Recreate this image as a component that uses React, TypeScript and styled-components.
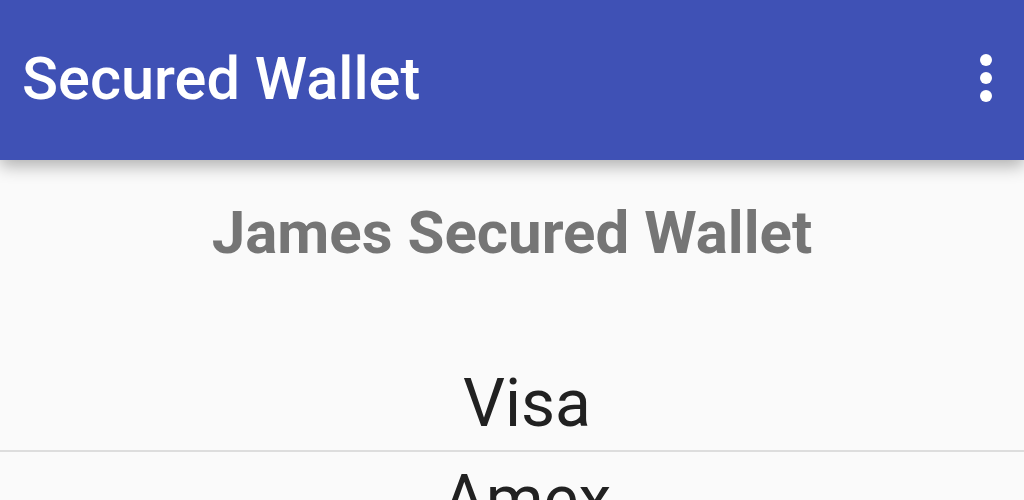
import React from 'react';
import styled, { createGlobalStyle } from 'styled-components';

const cards = ['Visa', 'Amex', 'MasterCard'];

const App: React.FC = () => {
  return (
    <>
      <GlobalStyle />
      <Screen>
        <AppBar>
          <Title>Secured Wallet</Title>
          <MenuButton aria-label="More options">
            <Dot />
            <Dot />
            <Dot />
          </MenuButton>
        </AppBar>

        <Content>
          <Heading>James Secured Wallet</Heading>
          <CardList>
            {cards.map((card) => (
              <CardRow key={card}>{card}</CardRow>
            ))}
          </CardList>
        </Content>
      </Screen>
    </>
  );
};

export default App;

// Styles
const GlobalStyle = createGlobalStyle`
  html, body {
    margin: 0;
    padding: 0;
    background: #fafafa;
    font-family: Roboto, 'Noto Sans', sans-serif;
    overflow: hidden;
  }
`;

const Screen = styled.div`
  width: 1024px;
  height: 500px;
  display: flex;
  flex-direction: column;
  background: #fafafa;
  overflow: hidden;
`;

const AppBar = styled.header`
  height: 160px;
  flex-shrink: 0;
  display: flex;
  align-items: center;
  padding: 0 22px;
  background: #3f51b5;
  box-shadow: 0 6px 16px rgba(0, 0, 0, 0.3);
  position: relative;
  z-index: 2;
`;

const Title = styled.h1`
  margin: -2px 0 0;
  flex-grow: 1;
  color: #ffffff;
  font-size: 59.5px;
  font-weight: 500;
  letter-spacing: 0;
`;

const MenuButton = styled.div`
  display: flex;
  flex-direction: column;
  align-items: center;
  gap: 6px;
  margin-right: 10px;
  margin-top: -4px;
`;

const Dot = styled.span`
  width: 12px;
  height: 12px;
  border-radius: 50%;
  background: #ffffff;
`;

const Content = styled.main`
  display: flex;
  flex-direction: column;
  align-items: center;
`;

const Heading = styled.h2`
  margin: 33px 0 0;
  color: #757575;
  font-size: 60px;
  font-weight: 700;
  line-height: 80px;
`;

const CardList = styled.div`
  width: 100%;
  margin-top: 83px;
`;

const CardRow = styled.div`
  height: 96px;
  display: flex;
  align-items: center;
  justify-content: center;
  padding-left: 30px;
  color: #212121;
  font-size: 66px;
  border-bottom: 2px solid #dddddd;
  box-sizing: border-box;
`;
